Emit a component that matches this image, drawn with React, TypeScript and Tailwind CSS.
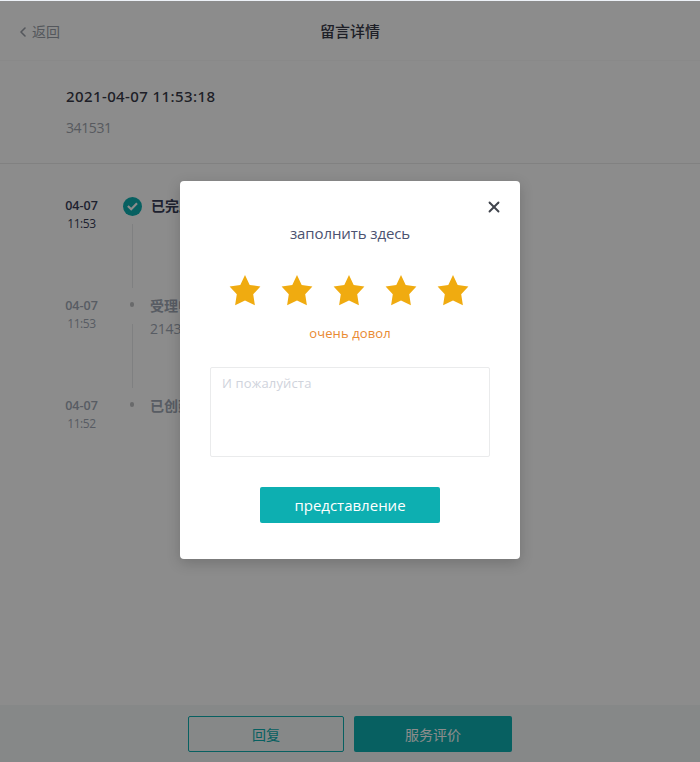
import { ChevronLeft, X } from 'lucide-react';

const records = [
  { date: '04-07', time: '11:53', title: '已完成', text: '', done: true },
  { date: '04-07', time: '11:53', title: '受理中', text: '214321', done: false },
  { date: '04-07', time: '11:52', title: '已创建', text: '', done: false },
];

function DoneIcon() {
  return (
    <svg className="h-[19px] w-[19px]" viewBox="0 0 19 19" fill="none">
      <circle cx="9.5" cy="9.5" r="9.5" fill="#0dafb1" />
      <path d="M4.9 9l3.3 3.2 5.8-5.9" stroke="#fff" strokeWidth="2.2" />
    </svg>
  );
}

function Star() {
  return (
    <svg className="h-8 w-8" viewBox="0 0 32 32" fill="#f0ab10">
      <path d="M16 1L20.7 10.9L31.4 12.4L24.2 20.3L25.9 31.3L16 26.4L6.1 31.3L7.8 20.3L0.6 12.4L11.3 10.9Z" />
    </svg>
  );
}

function Timeline() {
  return (
    <div className="flex flex-col pt-8 pl-[65px]">
      {records.map((item, i) => (
        <div key={i} className={item.done ? 'flex h-[100px] text-[#383c56]' : 'flex h-[100px] text-[#a0a8b4]'}>
          <div className="w-[33px] text-center text-[12px] leading-[18px] tracking-[-0.4px]">
            <div className="mt-px text-[12.5px] font-semibold tracking-normal">{item.date}</div>
            <div>{item.time}</div>
          </div>
          <div className="ml-[25px] flex w-[19px] flex-col items-center">
            <div className="flex h-5 items-center justify-center">
              {item.done ? <DoneIcon /> : <span className="mr-px mb-[3px] h-[5px] w-1 rounded-full bg-[#bfc1c4]" />}
            </div>
            {i < records.length - 1 && <div className="mt-2 h-16 w-px bg-[#e8eaec]" />}
          </div>
          <div className={item.done ? 'ml-[9px]' : 'ml-2'}>
            <div className="text-[14px] leading-[20px] font-bold">{item.title}</div>
            <div className="mt-[3px] text-[14px] leading-[20px] tracking-[-0.2px]">{item.text}</div>
          </div>
        </div>
      ))}
    </div>
  );
}

function RatingDialog() {
  return (
    <div className="absolute inset-x-0 top-px bottom-0 flex items-start justify-center bg-black/45 pt-[180px]">
      <div className="relative flex h-[378px] w-[340px] flex-col items-center rounded bg-white shadow-[0_4px_14px_rgba(0,0,0,0.18)]">
        <button className="absolute top-[17px] right-[17px] text-[#40444c]">
          <X className="h-[18px] w-[18px]" strokeWidth={2.5} />
        </button>
        <h2 className="mt-[41px] text-[15px] leading-[22px] tracking-[-0.1px] text-[#4c5270]">заполнить здесь</h2>
        <div className="mt-[30px] mr-[2px] flex gap-5">
          {[1, 2, 3, 4, 5].map((n) => (
            <Star key={n} />
          ))}
        </div>
        <p className="mt-[17px] text-[13px] leading-[20px] tracking-[0.1px] text-[#e98a32]">очень довол</p>
        <textarea
          className="mt-6 h-[90px] w-[280px] resize-none rounded-[2px] border border-[#eaebec] px-[11px] py-[5px] text-[13px] leading-[20px] tracking-[0.15px] outline-none placeholder:text-[#cfd3dc]"
          placeholder="И пожалуйста"
        />
        <button className="mt-[30px] h-9 w-[180px] rounded-[2px] bg-[#0dafb1] text-[15px] text-white">
          представление
        </button>
      </div>
    </div>
  );
}

export default function App() {
  return (
    <div className="relative flex h-[762px] w-[700px] flex-col overflow-hidden bg-white font-['Open_Sans','Noto_Sans_CJK_SC',sans-serif]">
      <div className="h-px shrink-0 bg-[#edf1f7]" />
      <header className="relative flex h-[60px] shrink-0 items-center justify-center border-b border-[#fafafa]">
        <button className="absolute left-[15px] flex items-center pt-[2px] text-[14px] text-[#9a9fa8]">
          <ChevronLeft className="mr-px h-4 w-4" strokeWidth={2.4} />
          返回
        </button>
        <h1 className="pt-[2px] text-[15px] font-medium text-[#383a47]">留言详情</h1>
      </header>

      <section className="h-[103px] shrink-0 border-b border-[#ececec] pt-[24px] pl-[66px]">
        <div className="font-['Noto_Sans','Open_Sans',sans-serif] text-[15px] leading-[22px] font-medium tracking-[0.4px] text-[#383a47]">
          2021-04-07 11:53:18
        </div>
        <div className="mt-[11px] text-[14px] leading-[20px] tracking-[-0.4px] text-[#a0a4ad]">341531</div>
      </section>

      <main className="min-h-0 flex-1">
        <Timeline />
      </main>

      <footer className="flex h-[57px] shrink-0 items-center justify-center gap-[10px] bg-[#f5f8f8] text-[14px]">
        <button className="h-9 w-[156px] rounded-[2px] border border-[#0dafb1] pt-[2px] text-[#0dafb1]">回复</button>
        <button className="h-9 w-[158px] rounded-[2px] bg-[#0dafb1] pt-[2px] text-white">服务评价</button>
      </footer>

      <RatingDialog />
    </div>
  );
}
